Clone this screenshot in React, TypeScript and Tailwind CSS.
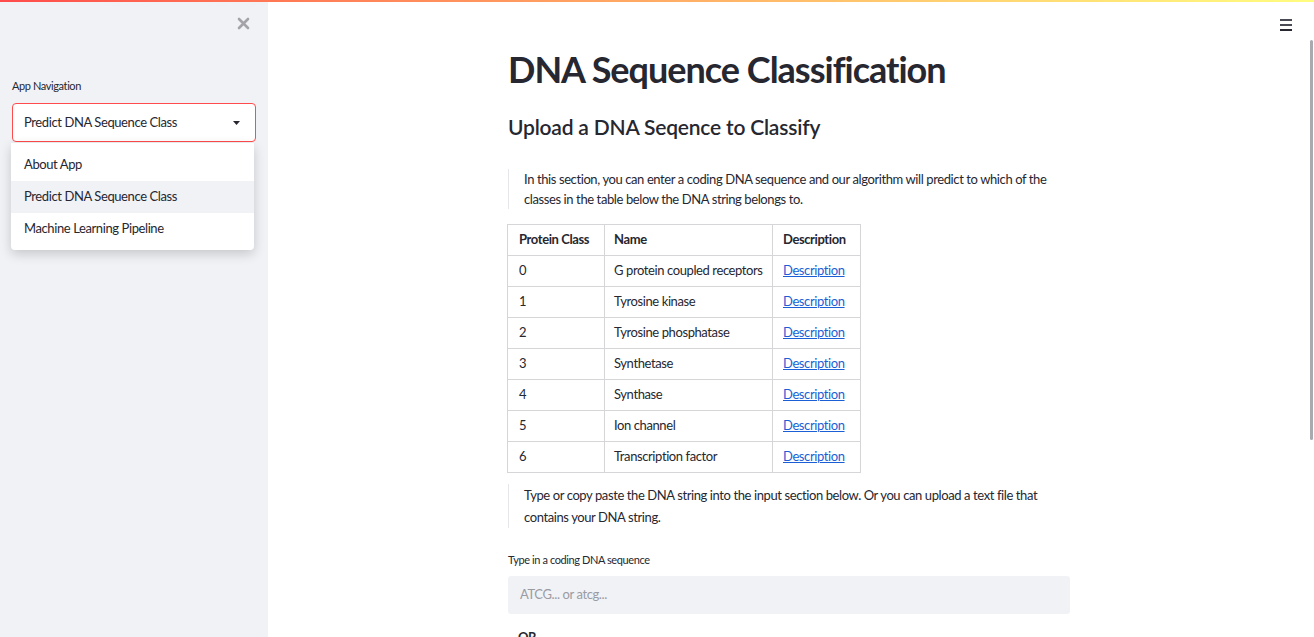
import React from "react";

const rows = [
  ["0", "G protein coupled receptors"],
  ["1", "Tyrosine kinase"],
  ["2", "Tyrosine phosphatase"],
  ["3", "Synthetase"],
  ["4", "Synthase"],
  ["5", "Ion channel"],
  ["6", "Transcription factor"],
];

export default function App() {
  return (
    <div
      className="relative h-[637px] w-[1314px] overflow-hidden bg-white tracking-[-0.4px] text-[#262730]"
      style={{ fontFamily: "Lato, 'Noto Sans', sans-serif" }}
    >
      <div className="absolute left-0 top-0 z-20 h-[2px] w-full bg-gradient-to-r from-[#ff4b4b] to-[#fffd80]" />
      <div className="flex h-full">
        {/* Sidebar */}
        <aside className="relative h-full w-[268px] shrink-0 bg-[#f0f2f6]">
          <div className="flex justify-end pr-[18px] pt-[17px]">
            <svg width="13" height="13" viewBox="0 0 13 13">
              <path d="M2 2 L11 11 M11 2 L2 11" stroke="#a3a3a8" strokeWidth="2.6" strokeLinecap="round" />
            </svg>
          </div>
          <div className="px-3 pt-[49px]">
            <div className="whitespace-nowrap text-[11px] leading-[14px] text-[#262730]">App Navigation</div>
            <div className="mt-[10px] flex h-[39px] items-center justify-between rounded-[4px] border border-[#ff4b4b] bg-white pl-[11px] pr-[15px]">
              <span className="whitespace-nowrap pt-[1px] text-[13px]">Predict DNA Sequence Class</span>
              <svg width="7" height="4" viewBox="0 0 7 4">
                <path d="M0 0 L7 0 L3.5 4 Z" fill="#262730" />
              </svg>
            </div>
          </div>
          <div className="absolute left-[11px] top-[143px] w-[243px] rounded-b-[4px] bg-white pb-[5px] pt-[6px] text-[13px] shadow-[0_4px_12px_rgba(0,0,0,0.18)]">
            <div className="flex h-[32px] items-center whitespace-nowrap pl-[13px]">About App</div>
            <div className="flex h-[32px] items-center whitespace-nowrap bg-[#f0f2f6] pl-[13px]">Predict DNA Sequence Class</div>
            <div className="flex h-[32px] items-center whitespace-nowrap pl-[13px]">Machine Learning Pipeline</div>
          </div>
        </aside>

        {/* Main */}
        <main className="relative h-full flex-1">
          <div className="absolute right-[22px] top-[19px] flex w-[12px] flex-col gap-[3px]">
            <div className="h-[2px] bg-[#4a4a55]" />
            <div className="h-[2px] bg-[#4a4a55]" />
            <div className="h-[2px] bg-[#262730]" />
          </div>
          <div className="absolute right-[1px] top-[40px] h-[400px] w-[3px] rounded-full bg-[#a9a9b0]" />

          <div className="ml-[240px] w-[562px] pt-[43px]">
            <h1 className="whitespace-nowrap text-[36px] font-bold leading-[52px] tracking-[-1px]">DNA Sequence Classification</h1>
            <h3 className="mt-[16px] whitespace-nowrap text-[21px] font-semibold leading-[32px] tracking-[-0.2px]">Upload a DNA Seqence to Classify</h3>

            <div className="mt-[26px] border-l border-[#e6e6ea] pl-[15px] text-[13px] leading-[20px]">
              <div className="whitespace-nowrap">
                In this section, you can enter a coding DNA sequence and our algorithm will predict to which of the
              </div>
              <div className="whitespace-nowrap">classes in the table below the DNA string belongs to.</div>
            </div>

            <table className="-ml-[1px] mt-[15px] w-[353px] table-fixed border-collapse text-[13px]">
              <colgroup>
                <col className="w-[97px]" />
                <col className="w-[168px]" />
                <col className="w-[88px]" />
              </colgroup>
              <thead>
                <tr className="h-[31px]">
                  <th className="whitespace-nowrap border border-[#d6d6d9] px-[11px] text-left font-bold">Protein Class</th>
                  <th className="whitespace-nowrap border border-[#d6d6d9] px-[9px] text-left font-bold">Name</th>
                  <th className="whitespace-nowrap border border-[#d6d6d9] px-[10px] text-left font-bold">Description</th>
                </tr>
              </thead>
              <tbody>
                {rows.map(([c, n]) => (
                  <tr key={c} className="h-[31px]">
                    <td className="border border-[#d6d6d9] px-[11px]">{c}</td>
                    <td className="whitespace-nowrap border border-[#d6d6d9] px-[9px]">{n}</td>
                    <td className="border border-[#d6d6d9] px-[10px]">
                      <span className="text-[#1a5fd6] underline">Description</span>
                    </td>
                  </tr>
                ))}
              </tbody>
            </table>

            <div className="mt-[11px] border-l border-[#e6e6ea] pl-[15px] text-[13px] leading-[22px]">
              <div className="whitespace-nowrap">
                Type or copy paste the DNA string into the input section below. Or you can upload a text file that
              </div>
              <div className="whitespace-nowrap">contains your DNA string.</div>
            </div>

            <div className="mt-[25px] whitespace-nowrap text-[11px] leading-[14px]">Type in a coding DNA sequence</div>
            <div className="mt-[9px] flex h-[38px] items-center rounded-[3px] bg-[#f0f2f6] pl-[12px] text-[13px] text-[#9a9ba3]">
              ATCG... or atcg...
            </div>
            <div className="mt-[14px] pl-[10px] text-[13px] font-bold">OR</div>
          </div>
        </main>
      </div>
    </div>
  );
}
